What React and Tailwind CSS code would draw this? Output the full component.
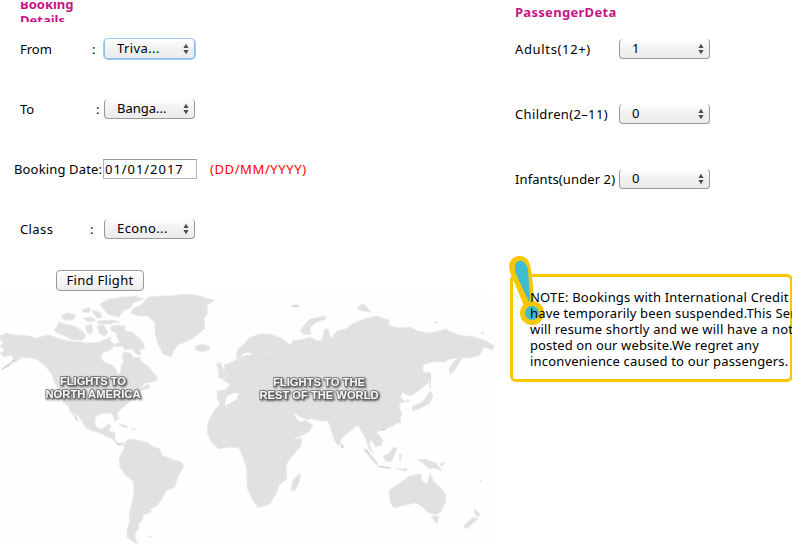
import React from "react";

function Label({ className, children }) {
  return <span className={"block shrink-0 whitespace-pre " + className}>{children}</span>;
}

function Select({ value, focused, textClass = "" }) {
  return (
    <div
      className={
        "flex h-5 w-[91px] shrink-0 items-center justify-between rounded-[4px] border border-t-0 bg-gradient-to-b from-white via-[#f1f1f1] to-[#ececec] pr-[5px] pl-3 " +
        (focused
          ? "border-[#8cbfee] ring-1 ring-[#9fcbf3]"
          : "border-[#999]")
      }
    >
      <span className={"pb-px leading-[18px] whitespace-nowrap " + textClass}>{value}</span>
      <svg width="6" height="12" viewBox="0 0 6 12" className="shrink-0 fill-[#4d4d4d]">
        <path d="M3 0.7 5.6 5H.4ZM3 11.3.4 7h5.2Z" />
      </svg>
    </div>
  );
}

function WorldMap() {
  return (
    <svg width="495" height="250" viewBox="0 294 495 250" className="block">
      <rect x="0" y="294" width="495" height="250" fill="#fefefe" />
      <g fill="#e1e1e1" stroke="#ebebeb" strokeWidth="0.8" strokeLinejoin="round">
        <path d="M0 336 7 333 14 335 21 335 29 336 37 338 43 336 50 335 57 338 68 341 80 342 88 343 100 342 106 339 111 341 115 346 108 351 102 353 101 358 104 362 112 365 116 369 118 374 121 372 121 366 124 361 122 356 124 352 130 353 134 358 139 357 143 363 148 366 151 370 155 374 158 380 152 382 145 383 141 388 148 384 150 388 143 390 138 391 134 398 128 403 121 409 117 413 118 420 115 421 112 414 106 413 100 414 95 418 95 425 99 429 104 428 108 424 111 425 109 431 115 433 115 440 120 444 124 442 123 446 118 445 112 439 105 436 100 433 93 431 86 428 82 421 77 415 73 411 79 421 76 419 70 411 68 406 63 402 60 397 58 389 54 381 51 373 45 366 38 360 31 358 22 357 17 361 8 366 0 370 8 364 14 360 11 355 4 357 0 353 5 350 0 346 4 342 0 340Z" />
        <path d="M130 313 134 308 141 305 148 297 160 296 170 296 183 294 196 295 206 298 215 300 207 305 208 313 204 319 205 328 200 333 192 339 185 342 178 345 174 350 171 357 163 354 158 344 155 333 155 323 148 316 139 316Z" />
        <path d="M100 304 109 299 121 297 136 296 144 299 133 303 131 308 124 310 119 317 109 315 104 310Z" />
        <path d="M57 327 59 322 65 324 75 326 82 331 86 335 83 340 73 340 65 336 57 333 54 330ZM61 316 68 313 76 315 73 320 64 320ZM82 310 90 307 90 312 84 313ZM83 318 93 317 96 321 88 322ZM91 310 100 312 102 318 97 318ZM98 321 112 320 120 322 109 324 98 324ZM85 326 91 324 93 328 91 334 87 333ZM97 326 104 325 108 333 104 336 99 333ZM111 326 119 325 125 326 125 331 132 332 138 337 143 342 145 348 139 350 142 355 136 354 132 349 125 350 122 346 117 347 114 344 120 342 117 338 116 333 111 331ZM107 338 111 337 110 341Z" />
        <path d="M195 346 202 344 210 346 209 350 202 352 196 350Z" />
        <path d="M124 444 127 440 133 439 141 441 148 443 152 446 160 449 162 455 171 459 181 462 184 466 180 473 177 479 175 487 166 491 162 499 157 506 150 509 152 512 143 515 143 520 139 523 139 529 135 533 135 538 138 544 133 542 127 537 127 529 130 521 129 514 132 503 134 490 133 481 126 476 120 467 119 460 121 453 124 449Z" />
        <path d="M118 424 124 425 128 428 121 426ZM130 428 136 429 134 430ZM118 415 120 420 119 418Z" />
        <path d="M217 372 225 370 224 365 232 362 239 358 246 355 253 355 249 352 242 354 239 361 236 356 238 349 244 344 249 338 259 334 270 334 281 338 290 345 293 340 300 340 310 337 318 341 322 340 324 330 328 328 331 339 337 331 346 329 352 324 364 319 377 316 389 320 389 326 402 328 410 327 418 331 429 333 446 329 459 335 475 337 484 340 495 346 492 350 484 347 480 355 470 358 462 358 455 370 450 375 449 369 453 362 458 358 450 359 444 362 432 362 423 365 423 372 431 373 429 382 421 389 413 395 405 396 408 400 410 401 400 403 399 408 402 413 400 421 393 426 383 430 376 432 383 440 381 445 376 447 371 440 369 443 372 450 374 454 369 449 366 440 363 434 358 425 350 431 342 438 339 446 335 442 331 430 328 421 322 421 311 419 304 420 296 415 294 414 298 421 304 419 313 425 309 432 303 435 293 439 302 438 301 446 294 454 287 463 286 470 287 479 279 485 277 492 270 504 258 508 252 499 247 488 247 478 246 466 242 455 239 448 230 447 219 449 211 442 207 432 208 422 214 411 220 404 217 399 217 391 226 390 230 384 223 380 228 375 221 374Z" />
        <path d="M216 364 221 362 223 369 228 375 223 379 218 377 219 371ZM300 331 304 325 310 319 325 316 326 319 317 322 310 328 311 334 305 335ZM357 309 361 304 365 305 371 312 363 311ZM292 305 299 305 299 307 292 307Z" />
        <path d="M430 372 431 384 430 389 429 381ZM426 397 430 391 433 395 430 403 421 408 413 411 412 406 421 403ZM399 418 401 423 399 424ZM381 429 386 429 382 431ZM341 443 345 447 341 448ZM292 483 295 478 300 473 300 480 295 491 291 490ZM363 449 367 450 378 463 377 466 371 459ZM378 466 391 468 390 469 378 467ZM383 456 388 454 394 447 397 448 394 456 391 462 386 461ZM399 454 402 455 400 461ZM417 460 424 459 436 463 442 471 434 468 429 469 423 463ZM440 464 445 462 442 467ZM395 468 407 470 404 471Z" />
        <path d="M389 490 397 485 404 480 409 476 419 474 422 475 421 480 427 484 430 473 434 482 440 487 445 493 446 501 441 512 435 515 427 512 423 507 416 503 405 505 394 508 390 502ZM431 516 439 516 437 524ZM474 508 480 514 477 518 475 513ZM473 517 478 519 472 524 467 529 463 526ZM479 482 482 479 481 482Z" />
      </g>
      <g fill="#fefefe">
        <path d="M225 403 227 396 234 393 239 393 237 399 232 402 225 406ZM294 413 300 417 306 419 301 422 296 418Z" />
        <path d="M402 392 408 396 406 402 401 398Z" />
      </g>
      <g fill="none" stroke="#c2c2c2" strokeWidth="0.8">
        <path d="M2 369 10 365M12 361 15 360M75 417 77 421M117 445 121 443M293 306 298 306M429 374 431 379M425 322 426 323M434 323 437 322M481 333 484 333M381 430 385 429M341 446 343 447M365 449 369 453M379 466 390 468M404 469 407 469M399 420 400 422M149 536 151 537" />
        <path d="M268 359 263 360M124 426 127 427" stroke="#d2d2d2" />
      </g>
      <g
        textAnchor="middle"
        className="fill-[#f8f8f8] font-['Liberation_Sans',Arial,sans-serif] text-[11px] font-bold [filter:drop-shadow(1px_1px_1px_#444)]"
        stroke="#6b6b6b"
        strokeWidth="1.4"
        strokeLinejoin="round"
        paintOrder="stroke"
      >
        <text x="93" y="385" textLength="66" lengthAdjust="spacingAndGlyphs">FLIGHTS TO</text>
        <text x="93" y="398" textLength="95" lengthAdjust="spacingAndGlyphs">NORTH AMERICA</text>
        <text x="319" y="386" textLength="92" lengthAdjust="spacingAndGlyphs">FLIGHTS TO THE</text>
        <text x="319" y="399" textLength="119" lengthAdjust="spacingAndGlyphs">REST OF THE WORLD</text>
      </g>
    </svg>
  );
}

function Notice() {
  return (
    <div className="relative mt-[63px] h-[108px] w-[283px] rounded-[6px] border-[3px] border-[#f8c704] pt-[12px] pl-[17px]">
      <svg width="40" height="74" viewBox="0 0 40 74" className="absolute -top-[23px] -left-[7px]">
        <path d="M14 2C5 2 1 10 4 18L18 52 28 51C28 42 27 25 24 11 22 5 19 2 14 2Z" fill="#f8c704" />
        <circle cx="26" cy="59" r="12" fill="#f8c704" />
        <path d="M13 7C8 8 8 15 10 20L23 48 24 44 22 16C21 10 17 6 13 7Z" fill="#3ebdd2" />
        <circle cx="26" cy="59" r="7" fill="#3ebdd2" />
      </svg>
      <p className="relative leading-4 whitespace-nowrap">
        <span className="block tracking-[0.2px]">NOTE: Bookings with International Credit Card</span>
        <span className="block tracking-[0.17px]">have temporarily been suspended.This Service</span>
        <span className="block tracking-[0.22px]">will resume shortly and we will have a notice</span>
        <span className="block tracking-[0.12px]">posted on our website.We regret any</span>
        <span className="block tracking-[0.17px]">inconvenience caused to our passengers.</span>
      </p>
    </div>
  );
}

export default function App() {
  return (
    <div className="flex h-[555px] w-[792px] overflow-hidden bg-white font-['Noto_Sans','Open_Sans',sans-serif] text-[13px] leading-4 text-black">
      <section className="w-[510px] shrink-0 pt-[2px]">
        <h2 className="ml-5 h-5 w-[70px] overflow-hidden font-bold text-[#c71585]">
          <span className="-mt-[6px] block">Booking Details</span>
        </h2>
        <div className="mb-[3px] flex h-[54px] items-center pl-5">
          <Label className="w-[72px]">From</Label>
          <Label className="w-3">:</Label>
          <Select value="Triva..." textClass="tracking-[0.4px]" focused />
        </div>
        <div className="flex h-[60px] items-center pl-5">
          <Label className="w-[76px]">To</Label>
          <Label className="w-2">:</Label>
          <Select value="Banga..." />
        </div>
        <div className="flex h-[60px] items-center pl-[14px]">
          <Label className="w-[89px] tracking-[0.15px]">Booking Date:</Label>
          <div className="flex h-5 w-[94px] shrink-0 items-center border border-[#b5b5b5] border-t-[#999] pl-px tracking-[0.95px]">
            01/01/2017
          </div>
          <Label className="ml-[13px] tracking-[0.6px] text-[#f00]">(DD/MM/YYYY)</Label>
        </div>
        <div className="flex h-[60px] items-center pl-5">
          <Label className="w-[70px] tracking-[0.4px]">Class</Label>
          <Label className="w-[14px]">:</Label>
          <Select value="Econo..." textClass="tracking-[0.4px]" />
        </div>
        <button className="mt-[11px] mb-[3px] ml-14 block h-[21px] w-[88px] rounded-[4px] border border-[#999] bg-gradient-to-b from-white to-[#ececec] pb-px leading-[18px] tracking-[0.3px]">
          Find Flight
        </button>
        <WorldMap />
      </section>
      <section className="w-[283px] shrink-0 pt-[4px]">
        <h2 className="ml-[5px] h-4 w-[103px] overflow-hidden font-bold tracking-[0.3px] whitespace-nowrap text-[#c71585]">
          PassengerDeta
        </h2>
        <div className="mt-[-3px] flex h-[64px] items-center pl-[5px]">
          <Label className="w-[104px] tracking-[0.65px]">Adults(12+)</Label>
          <Select value="1" />
        </div>
        <div className="flex h-[66px] items-center pl-[5px]">
          <Label className="w-[104px] tracking-[0.35px]">Children(2–11)</Label>
          <Select value="0" />
        </div>
        <div className="flex h-[64px] items-center pl-[5px]">
          <Label className="w-[104px] tracking-[0.1px]">Infants(under 2)</Label>
          <Select value="0" />
        </div>
        <Notice />
      </section>
    </div>
  );
}
